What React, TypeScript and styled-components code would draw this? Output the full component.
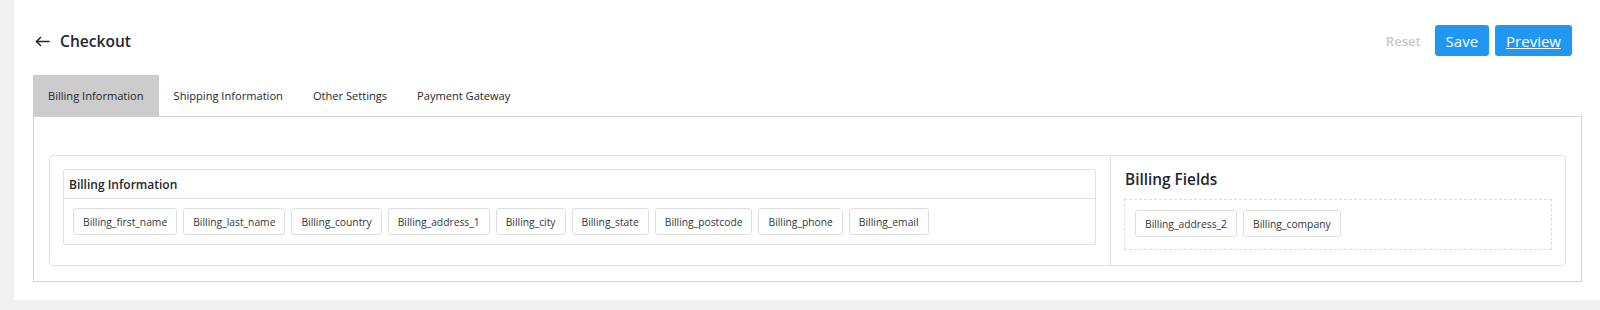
import React from "react";
import styled, { createGlobalStyle } from "styled-components";

const GlobalStyle = createGlobalStyle`
  body {
    margin: 0;
    background: #f0f0f1;
    font-family: "Open Sans", "Noto Sans", sans-serif;
    color: #23282d;
  }
`;

const TABS = ["Billing Information", "Shipping Information", "Other Settings", "Payment Gateway"];

const ACTIVE_FIELDS = [
  "Billing_first_name",
  "Billing_last_name",
  "Billing_country",
  "Billing_address_1",
  "Billing_city",
  "Billing_state",
  "Billing_postcode",
  "Billing_phone",
  "Billing_email",
];

const SPARE_FIELDS = ["Billing_address_2", "Billing_company"];

// thin back arrow, wider than it is tall
const BackArrow = () => (
  <svg width="15" height="11" viewBox="0 0 15 11" fill="none" stroke="currentColor" strokeWidth="1.6" strokeLinecap="round" strokeLinejoin="round">
    <path d="M14 5.5H1.5" />
    <path d="M5.5 1.5L1.5 5.5L5.5 9.5" />
  </svg>
);

const App = () => {
  return (
    <>
      <GlobalStyle />
      <Page>
        <Panel>
          <Header>
            <Title>
              <BackArrow />
              <span>Checkout</span>
            </Title>
            <Actions>
              <ResetButton>Reset</ResetButton>
              <PrimaryButton>Save</PrimaryButton>
              <PrimaryButton underline>Preview</PrimaryButton>
            </Actions>
          </Header>

          <TabList>
            {TABS.map((tab, index) => (
              <Tab key={tab} active={index === 0}>
                {tab}
              </Tab>
            ))}
          </TabList>

          <TabPanel>
            <Card>
              <FieldsColumn>
                <Group>
                  <GroupTitle>Billing Information</GroupTitle>
                  <ChipRow>
                    {ACTIVE_FIELDS.map((field) => (
                      <Chip key={field}>{field}</Chip>
                    ))}
                  </ChipRow>
                </Group>
              </FieldsColumn>
              <SideColumn>
                <SideTitle>Billing Fields</SideTitle>
                <DropZone>
                  {SPARE_FIELDS.map((field) => (
                    <Chip key={field}>{field}</Chip>
                  ))}
                </DropZone>
              </SideColumn>
            </Card>
          </TabPanel>
        </Panel>
      </Page>
    </>
  );
};

export default App;

const Page = styled.div`
  display: flex;
  height: 310px;
  padding-left: 14px;
  padding-bottom: 10px;
  box-sizing: border-box;
`;

const Panel = styled.main`
  flex: 1;
  background: #fff;
  padding: 25px 18px 19px 19px;
`;

const Header = styled.header`
  display: flex;
  align-items: center;
  justify-content: space-between;
  height: 31px;
  padding: 0 10px 0 2px;
  margin-bottom: 19px;
`;

const Title = styled.h1`
  display: flex;
  align-items: center;
  gap: 10px;
  margin: 0;
  font-size: 15.6px;
  font-weight: 600;
  color: #23282d;

  svg {
    color: #23282d;
    margin-top: 1px;
  }
`;

const Actions = styled.div`
  display: flex;
  align-items: center;
  gap: 6px;
`;

const ResetButton = styled.button`
  border: none;
  background: none;
  padding: 0;
  margin-right: 8px;
  font-family: inherit;
  font-size: 13px;
  font-weight: 600;
  color: #c8c8c8;
`;

const PrimaryButton = styled.button<{ underline?: boolean }>`
  height: 31px;
  padding: 0 11px;
  border: none;
  border-radius: 3px;
  background: #2196f3;
  color: #fff;
  font-family: inherit;
  font-size: 15px;
  text-decoration: ${(p) => (p.underline ? "underline" : "none")};
`;

const TabList = styled.nav`
  display: flex;
  height: 41px;
`;

const Tab = styled.div<{ active?: boolean }>`
  display: flex;
  align-items: center;
  padding: 0 15px;
  font-size: 11.1px;
  color: #23282d;
  background: ${(p) => (p.active ? "#cccccc" : "transparent")};
`;

const TabPanel = styled.section`
  border: 1px solid #d4d4d4;
  padding: 38px 15px 15px;
`;

const Card = styled.div`
  display: flex;
  border: 1px solid #e2e2e2;
  border-radius: 4px;
`;

const FieldsColumn = styled.div`
  flex: 1;
  padding: 13px 14px 14px 13px;
  border-right: 1px solid #e2e2e2;
`;

const Group = styled.div`
  border: 1px solid #e2e2e2;
  border-radius: 2px;
`;

const GroupTitle = styled.div`
  display: flex;
  align-items: center;
  height: 28px;
  padding: 0 5px;
  border-bottom: 1px solid #e2e2e2;
  font-size: 12px;
  font-weight: 600;
  color: #23282d;
`;

const ChipRow = styled.div`
  display: flex;
  flex-wrap: wrap;
  gap: 6px;
  padding: 9px 9px;
`;

const Chip = styled.span`
  display: inline-flex;
  align-items: center;
  height: 27px;
  box-sizing: border-box;
  padding: 0 9px;
  border: 1px solid #dedede;
  border-radius: 3px;
  background: #fff;
  font-size: 10.3px;
  color: #32373c;
`;

const SideColumn = styled.div`
  width: 428px;
  padding: 13px 13px 15px 13px;
`;

const SideTitle = styled.h3`
  margin: 0 0 8px 1px;
  font-size: 15.4px;
  line-height: 22px;
  font-weight: 600;
  color: #23282d;
`;

const DropZone = styled.div`
  display: flex;
  gap: 6px;
  padding: 10px 10px 12px;
  border: 1px dashed #dcdcdc;
`;
